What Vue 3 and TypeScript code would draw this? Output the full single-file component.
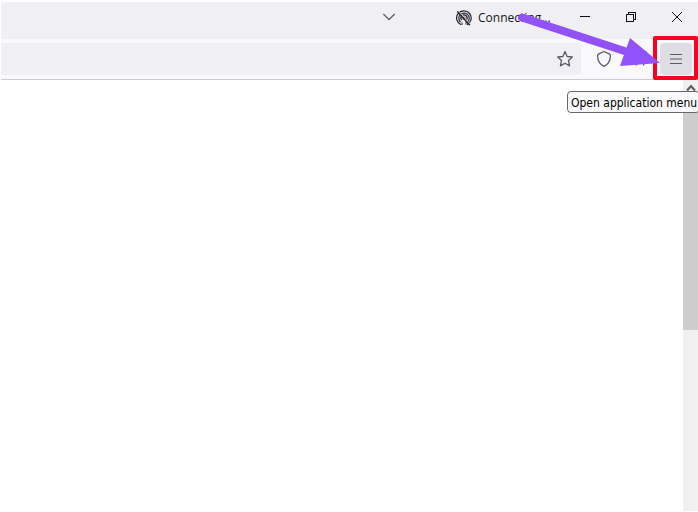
<script setup lang="ts">
import { ref } from 'vue'

const address = ref('')
const status = 'Connecting...'
const menuHint = 'Open application menu'
</script>

<template>
  <div class="window">
    <header class="titlebar">
      <button class="tabs-button" type="button" aria-label="List all tabs">
        <svg width="14" height="8" viewBox="0 0 14 8"><path d="M1.3 1 L7 6.6 L12.7 1" fill="none" stroke="#65656d" stroke-width="1.4" /></svg>
      </button>
      <div class="connection">
        <svg width="16" height="16" viewBox="0 0 16 16" fill="none" stroke="#25242b" stroke-width="1.2">
          <path d="M5 14.8 A7.3 7.3 0 1 1 11 14.7" />
          <path d="M4.6 12.2 A5.2 5.2 0 1 1 11.4 12.2" />
          <path d="M5.6 10 A3.1 3.1 0 1 1 10.4 10" />
          <path d="M6 12.5 V15 M10 12 V14.6" stroke-width="1" />
          <circle cx="8" cy="8" r="1" fill="#25242b" />
          <path d="M2.6 1.2 L14.8 14.6" stroke="#f0f0f4" stroke-width="0.9" />
          <path d="M1.4 1.4 L13.8 15.2" stroke-width="1.5" />
        </svg>
        <span>{{ status }}</span>
      </div>
      <nav class="window-controls" aria-label="Window">
        <button type="button" aria-label="Minimize">
          <svg width="12" height="12" viewBox="0 0 12 12" shape-rendering="crispEdges"><path d="M1 5.5 H11" stroke="#111" /></svg>
        </button>
        <button type="button" aria-label="Restore">
          <svg width="12" height="12" viewBox="0 0 12 12" fill="none" stroke="#111" shape-rendering="crispEdges"><path d="M1.5 3.5 H8.5 V10.5 H1.5 Z M3.5 3 V1.5 H10.5 V8.5 H9" /></svg>
        </button>
        <button type="button" aria-label="Close">
          <svg width="12" height="12" viewBox="0 0 12 12"><path d="M1 1 L11 11 M11 1 L1 11" stroke="#111" stroke-width="1" /></svg>
        </button>
      </nav>
    </header>

    <div class="toolbar">
      <div class="urlbar">
        <input v-model="address" type="text" aria-label="Address" />
        <button type="button" aria-label="Bookmark this page">
          <svg width="18" height="18" viewBox="0 0 18 18" fill="none" stroke="#5b5b66" stroke-width="1.3" stroke-linejoin="round"><path d="M9 1.6 L11.1 6.5 L16.3 7 L12.5 10.5 L13.6 15.9 L9 13.2 L4.4 15.9 L5.5 10.5 L1.7 7 L6.9 6.5 Z" /></svg>
        </button>
      </div>
      <div class="tools">
        <button class="tool" type="button" aria-label="Security level">
          <svg width="16" height="18" viewBox="0 0 16 18" fill="none" stroke="#5b5b66" stroke-width="1.3" stroke-linejoin="round"><path d="M8 1.5 L13.7 4.2 Q14.5 4.6 14.4 6 Q14.2 13.6 8 16.3 Q1.8 13.6 1.6 6 Q1.5 4.6 2.3 4.2 Z" /></svg>
        </button>
        <button class="tool" type="button" aria-label="New identity">
          <svg width="16" height="18" viewBox="0 0 16 18" fill="none" stroke="#5b5b66" stroke-width="1.3"><path d="M14.5 1.5 L9 9 M4 15.5 L6 10 Q8 8 10 10 L12 15.5 M15 4 V6" /></svg>
        </button>
        <button class="tool menu" type="button" aria-label="Open application menu">
          <svg width="14" height="14" viewBox="0 0 14 14"><path d="M1 2.5 H13 M1 7 H13 M1 11.5 H13" stroke="#5b5b66" stroke-width="1.2" /></svg>
        </button>
      </div>
    </div>

    <main class="page">
      <div class="content"></div>
      <div class="scrollbar">
        <div class="scroll-up">
          <svg width="10" height="8" viewBox="0 0 10 8"><path d="M1 6.5 L5 2.2 L9 6.5" fill="none" stroke="#606060" stroke-width="2.2" /></svg>
        </div>
        <div class="thumb"></div>
      </div>
    </main>

    <div class="tooltip" role="tooltip">{{ menuHint }}</div>
    <div class="highlight"></div>
    <svg class="arrow" width="144" height="58" viewBox="0 0 144 58" aria-hidden="true">
      <path d="M6 7.5 L110 41.5" stroke="#9152fb" stroke-width="8" stroke-linecap="round" />
      <path d="M114 28 L144 53 L104 56 Z" fill="#9152fb" />
    </svg>
  </div>
</template>

<style>
body {
  margin: 0;
  background: #fff;
}
</style>

<style scoped>
.window {
  position: relative;
  display: flex;
  flex-direction: column;
  box-sizing: border-box;
  height: 100vh;
  padding: 2px 0 1px 1px;
  overflow: hidden;
  font: 12px/16px "Open Sans", "Noto Sans", sans-serif;
  color: #15141a;
}

button {
  display: flex;
  align-items: center;
  justify-content: center;
  flex: none;
  padding: 0;
  border: 0;
  background: transparent;
}

svg {
  display: block;
}

.titlebar {
  display: flex;
  justify-content: flex-end;
  flex: none;
  height: 37px;
  background: #f0f0f4;
}

.tabs-button {
  width: 32px;
  height: 30px;
  margin-right: 51px;
}

.connection {
  display: flex;
  align-items: center;
  gap: 6px;
  width: 106px;
  height: 31px;
  white-space: nowrap;
}

.window-controls {
  display: flex;
}

.window-controls button {
  box-sizing: border-box;
  width: 46px;
  height: 30px;
}

.window-controls button:last-child {
  width: 44px;
  padding-left: 2px;
}

.toolbar {
  display: flex;
  align-items: center;
  flex: none;
  gap: 7px;
  height: 40px;
  padding-right: 6px;
  border-bottom: 1px solid #ccc;
  background: #f9f9fb;
}

.urlbar {
  display: flex;
  flex: 1;
  height: 32px;
  border-radius: 0 4px 4px 0;
  background: #f0f0f4;
}

.urlbar input {
  flex: 1;
  min-width: 0;
  padding: 0 8px;
  border: 0;
  outline: 0;
  background: transparent;
  font: inherit;
}

.tools {
  display: flex;
  gap: 4px;
}

.urlbar button,
.tool {
  width: 32px;
  height: 32px;
  border-radius: 4px;
}

.tool.menu {
  background: #dddde3;
}

.page {
  display: flex;
  flex: 1;
  min-height: 0;
  background: #fff;
}

.content {
  flex: 1;
}

.scrollbar {
  width: 15px;
  background: #f0f0f0;
}

.scroll-up {
  display: flex;
  align-items: center;
  justify-content: center;
  height: 16px;
}

.thumb {
  height: 234px;
  background: #cdcdcd;
}

.tooltip {
  position: absolute;
  top: 91px;
  right: -2px;
  box-sizing: border-box;
  width: 133px;
  height: 22px;
  padding: 3px;
  border: 1px solid #67676c;
  border-radius: 4px;
  background: #f9f9fb;
  color: #000;
  font-family: "DejaVu Sans Condensed", "Open Sans", sans-serif;
  line-height: 16px;
  white-space: nowrap;
}

.highlight {
  position: absolute;
  top: 36px;
  right: 0;
  box-sizing: border-box;
  width: 45px;
  height: 44px;
  border: 4px solid #fc0220;
  border-radius: 2px;
  pointer-events: none;
}

.arrow {
  position: absolute;
  top: 10px;
  right: 38px;
  pointer-events: none;
}
</style>
